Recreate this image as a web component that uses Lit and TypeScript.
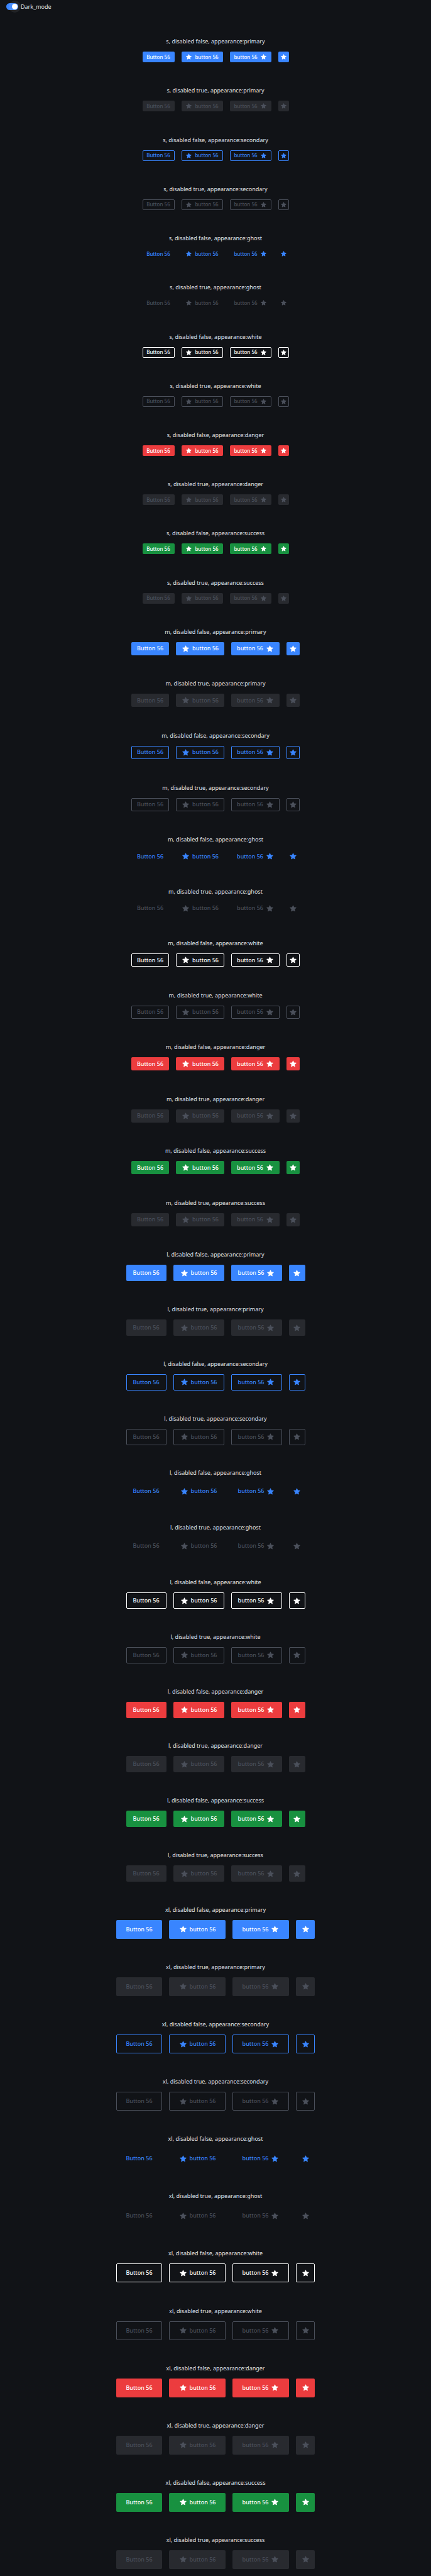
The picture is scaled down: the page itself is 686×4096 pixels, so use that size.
import { LitElement, html, css, svg } from "lit";
import { customElement, property, state } from "lit/decorators.js";
import { classMap } from "lit/directives/class-map.js";

type Size = "s" | "m" | "l" | "xl";
const SIZES: Size[] = ["s", "m", "l", "xl"];
const APPEARANCES = ["primary", "secondary", "ghost", "white", "danger", "success"];

const star = html`<svg class="icon" viewBox="0 0 24 24" aria-hidden="true">
  ${svg`<path d="M12 2.700a.9.9 0 0 1 .8.5l2.300 5.200 5.600.5c.8.1 1.100 1 .5 1.600l-4.300 3.700 1.300 5.500c.2.8-.7 1.400-1.400 1L12 17.800l-4.800 2.900c-.7.4-1.600-.2-1.400-1l1.300-5.500L2.800 10.500c-.6-.6-.3-1.500.5-1.600l5.600-.5 2.300-5.200a.9.9 0 0 1 .8-.5z"/>`}
</svg>`;

@customElement("demo-button")
export class DemoButton extends LitElement {
  @property() size: Size = "m";
  @property() appearance = "primary";
  @property() icon: "none" | "left" | "right" | "only" = "none";
  @property({ type: Boolean }) disabled = false;

  static styles = css`
    :host { display: block; }
    .button {
      display: flex;
      align-items: center;
      justify-content: center;
      gap: 4px;
      box-sizing: border-box;
      margin: 0;
      padding: 0;
      border: 1px solid transparent;
      border-radius: 2px;
      background: transparent;
      color: #fff;
      font: 500 9px/12px "Noto Sans", sans-serif;
      white-space: nowrap;
      cursor: pointer;
    }
    .icon { flex: none; width: 13px; height: 13px; fill: currentColor; }
    .s { height: 17px; min-width: 51px; font-size: 8px; }
    .s .icon { width: 11px; height: 11px; }
    .m { height: 21px; min-width: 60px; }
    .l { height: 26px; min-width: 64px; }
    .xl { height: 30px; min-width: 73px; }
    .s.with-icon { min-width: 66px; }
    .m.with-icon { min-width: 77px; }
    .l.with-icon { min-width: 81px; }
    .xl.with-icon { min-width: 90px; }
    .s.only { min-width: 17px; }
    .m.only { min-width: 21px; }
    .l.only { min-width: 26px; }
    .xl.only { min-width: 30px; }
    .primary { background: #3985ff; }
    .danger { background: #ec3c3e; }
    .success { background: #189140; }
    .secondary { border-color: #3985ff; color: #3985ff; }
    .ghost { color: #3985ff; }
    .white { border-color: #fff; }
    .button:disabled { background: #282a2f; color: #4b505b; cursor: default; }
    .secondary:disabled, .white:disabled { background: transparent; border-color: #4b505b; }
    .ghost:disabled { background: transparent; }
  `;

  render() {
    const classes = {
      button: true,
      [this.size]: true,
      [this.appearance]: true,
      "with-icon": this.icon === "left" || this.icon === "right",
      only: this.icon === "only",
    };
    const content = {
      none: html`<span>Button 56</span>`,
      left: html`${star}<span>button 56</span>`,
      right: html`<span>button 56</span>${star}`,
      only: star,
    }[this.icon];
    return html`<button class=${classMap(classes)} type="button" ?disabled=${this.disabled}
      aria-label=${this.icon === "only" ? "Favourite" : "Button 56"}>${content}</button>`;
  }
}

@customElement("app-root")
export class AppRoot extends LitElement {
  @state() private dark = true;

  static styles = css`
    :host { display: block; }
    .page {
      display: grid;
      grid-template-columns: 1fr;
      grid-template-rows: 60fr repeat(12, 146fr) repeat(12, 154fr) repeat(12, 162fr) repeat(12, 170fr);
      min-height: 100vh;
      background: #111317;
      color: #e0e2e7;
      font: 9px/13px "Noto Sans", sans-serif;
    }
    .page.light { background: #fff; color: #282a2f; }
    .mode {
      display: flex;
      align-items: flex-start;
      gap: 4px;
      padding: 5px 10px;
    }
    .switch {
      appearance: none;
      display: flex;
      justify-content: flex-start;
      align-items: center;
      box-sizing: border-box;
      width: 19px;
      height: 11px;
      margin: 0;
      padding: 1px;
      border-radius: 6px;
      background: #4b505b;
      cursor: pointer;
    }
    .switch::before {
      content: "";
      width: 9px;
      height: 9px;
      border-radius: 50%;
      background: #fff;
      box-shadow: 0 0 0 5px rgba(255, 255, 255, 0.07);
    }
    .switch:checked { justify-content: flex-end; background: #3985ff; }
    .mode label { line-height: 11px; }
    .group {
      display: flex;
      flex-direction: column;
      align-items: center;
      gap: 10px;
      padding-top: 27px;
    }
    .caption { margin: 0; }
    .row { display: flex; gap: 11px; }
  `;

  private group(size: Size, appearance: string, disabled: boolean) {
    return html`<section class="group">
      <p class="caption">${size}, disabled ${disabled}, appearance:${appearance}</p>
      <div class="row">
        ${(["none", "left", "right", "only"] as const).map(
          (icon) => html`<demo-button .size=${size} .appearance=${appearance} .icon=${icon} .disabled=${disabled}></demo-button>`
        )}
      </div>
    </section>`;
  }

  render() {
    return html`<main class=${classMap({ page: true, light: !this.dark })}>
      <div class="mode">
        <input class="switch" id="mode" type="checkbox" .checked=${this.dark}
          @change=${(e: Event) => (this.dark = (e.target as HTMLInputElement).checked)} />
        <label for="mode">Dark_mode</label>
      </div>
      ${SIZES.map((size) =>
        APPEARANCES.map((a) => [this.group(size, a, false), this.group(size, a, true)])
      )}
    </main>`;
  }
}
